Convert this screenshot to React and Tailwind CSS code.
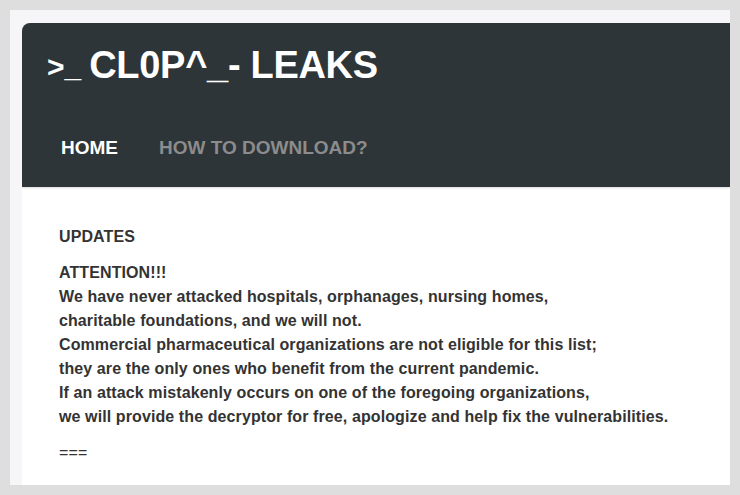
export default function App() {
  const lines = [
    "We have never attacked hospitals, orphanages, nursing homes,",
    "charitable foundations, and we will not.",
    "Commercial pharmaceutical organizations are not eligible for this list;",
    "they are the only ones who benefit from the current pandemic.",
    "If an attack mistakenly occurs on one of the foregoing organizations,",
    "we will provide the decryptor for free, apologize and help fix the vulnerabilities.",
  ];
  return (
    <div className="w-[740px] h-[495px] bg-[#dedede] p-[10px] overflow-hidden" style={{ fontFamily: '"Liberation Sans", Arial, sans-serif' }}>
      <div className="w-[720px] h-[475px] bg-[#f6f6f8] pl-[12px] pt-[13px] flex flex-col">
        <div className="flex-1 flex flex-col bg-white rounded-tl-[8px] overflow-hidden">
          <div className="h-[164px] bg-[#2e3538] flex flex-col shadow-[0_1px_2px_rgba(0,0,0,0.15)]">
            <div className="h-[84px] flex items-center pl-[25px]">
              <span className="text-white font-bold text-[30px] leading-none mr-[8px] mt-[4px]">&gt;_</span>
              <span className="text-white font-bold text-[38px] leading-none tracking-[-0.3px]">CL0P^_- LEAKS</span>
            </div>
            <div className="flex items-center pl-[39px] pt-[20px] gap-[41px] h-[60px]">
              <span className="text-white font-bold text-[19px] leading-none">HOME</span>
              <span className="text-[#8c8c8c] font-bold text-[19px] leading-none">HOW TO DOWNLOAD?</span>
            </div>
          </div>
          <div className="pl-[37px] pt-[38px] text-[#333333] font-bold text-[16px] leading-[24px] tracking-[0.1px]">
            <div>UPDATES</div>
            <div className="mt-[12px]">ATTENTION!!!</div>
            {lines.map((l, i) => (
              <div key={i}>{l}</div>
            ))}
            <div className="mt-[12px] font-normal">===</div>
          </div>
        </div>
      </div>
    </div>
  );
}
